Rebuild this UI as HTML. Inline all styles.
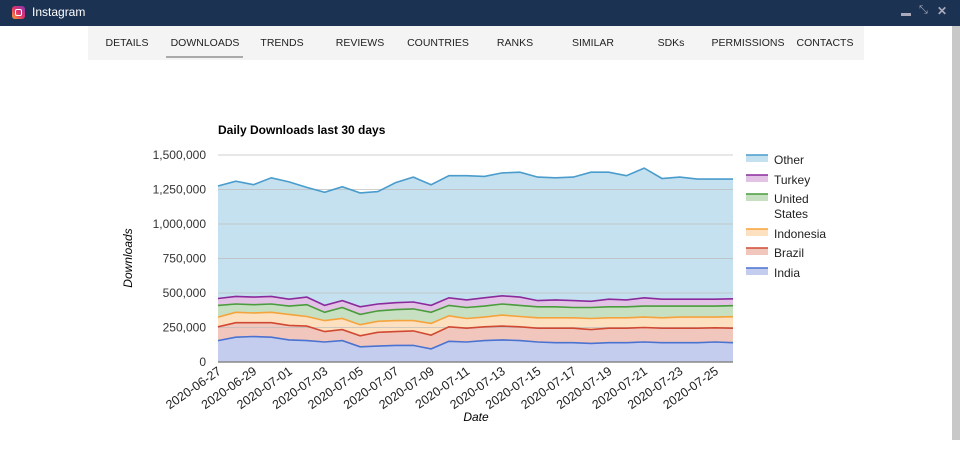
<!DOCTYPE html><html><head><meta charset="utf-8"><style>
*{margin:0;padding:0;box-sizing:border-box}
body{width:960px;height:455px;overflow:hidden;background:#fff;font-family:"Liberation Sans",sans-serif;position:relative}
.hdr{position:absolute;left:0;top:0;width:960px;height:26px;background:#1b3252;color:#fff;font-size:12px}
.nav{position:absolute;left:88px;top:26px;width:776px;height:34px;background:#f4f4f4;font-size:10.5px;color:#222}
.nav span{position:absolute;top:11px;transform:translateX(-50%);white-space:nowrap}
.sb{position:absolute;left:952px;top:26px;width:8px;height:414px;background:#c8c8c8}
</style></head><body>
<div class="hdr">
<div style="position:absolute;left:12px;top:6px;width:13px;height:13px;border-radius:3px;background:linear-gradient(45deg,#f9a334,#e1306c,#833ab4)"><div style="position:absolute;left:3px;top:3px;width:7px;height:7px;border:1.3px solid #fff;border-radius:2px"></div></div>
<div style="position:absolute;left:32px;top:5px">Instagram</div>
<div style="position:absolute;left:901px;top:13px;width:10px;height:3px;background:#aab"></div>
<div style="position:absolute;left:919px;top:4px;color:#aab;font-size:11px">⤡</div>
<div style="position:absolute;left:937px;top:4px;color:#aab;font-size:12px;font-weight:bold">✕</div>
</div>
<div class="nav">
<span style="left:39px">DETAILS</span><span style="left:117px">DOWNLOADS</span><span style="left:194px">TRENDS</span><span style="left:272px">REVIEWS</span><span style="left:350px">COUNTRIES</span><span style="left:427px">RANKS</span><span style="left:505px">SIMILAR</span><span style="left:583px">SDKs</span><span style="left:660px">PERMISSIONS</span><span style="left:737px">CONTACTS</span>
<div style="position:absolute;left:78px;top:30px;width:77px;height:2px;background:#aaa"></div>
</div>
<div class="sb"></div>
<svg id="c" width="960" height="455" style="position:absolute;left:0;top:0" font-family="Liberation Sans, sans-serif"></svg>
<script>
var s=document.getElementById('c'),h='';
var L=218,R=733,B=362,k=207/1500;
function Y(v){return B-v*k}
function X(i){return L+i*(R-L)/29}
var d=[
[155,180,185,180,160,155,145,155,110,115,120,120,95,150,145,155,160,155,145,140,140,135,140,140,145,140,140,140,145,140],
[255,285,285,285,265,260,220,235,190,215,220,225,195,255,245,255,260,255,245,245,245,235,245,245,250,245,245,245,248,245],
[325,360,355,360,345,330,300,315,270,295,300,300,280,335,315,325,340,330,320,320,320,315,320,320,325,320,325,325,325,328],
[410,420,415,420,405,415,360,395,345,370,380,385,360,410,395,405,420,410,400,400,395,395,400,400,405,405,405,405,405,408],
[460,475,470,475,455,470,410,445,400,420,430,435,410,465,450,465,480,470,445,450,445,440,455,450,465,455,455,455,455,458],
[1275,1310,1285,1335,1305,1265,1230,1270,1225,1235,1300,1340,1285,1350,1350,1345,1370,1375,1340,1335,1340,1375,1375,1350,1405,1330,1340,1325,1325,1325]];
var lc=['#4a72d0','#d04a33','#f5a33c','#4a9c3c','#8a2a9c','#4a9ccc'],fc=['#c5cdef','#f1c6bd','#fde0bf','#c7e0c2','#e2c3e6','#c5e1ef'];
var q='';
for(var j=5;j>=0;j--){var p='';for(var i=0;i<30;i++){p+=(i?'L':'M')+X(i).toFixed(1)+','+Y(d[j][i]).toFixed(1)}
var a=p;for(var i=29;i>=0;i--){a+='L'+X(i).toFixed(1)+','+(j?Y(d[j-1][i]):B).toFixed(1)}
h+='<path d="'+a+'Z" fill="'+fc[j]+'"/>';q+='<path d="'+p+'" fill="none" stroke="'+lc[j]+'" stroke-width="1.6"/>'}
for(var j=1;j<=6;j++){var yy=Y(j*250);h+='<line x1="'+L+'" x2="'+R+'" y1="'+yy+'" y2="'+yy+'" stroke="#bbb" stroke-opacity="0.7"/>'}
h+=q;
h+='<line x1="'+L+'" x2="'+R+'" y1="'+B+'" y2="'+B+'" stroke="#888" stroke-width="1.5"/>';
var lab=['0','250,000','500,000','750,000','1,000,000','1,250,000','1,500,000'];
for(var j=0;j<7;j++)h+='<text x="206" y="'+(Y(j*250)+4)+'" text-anchor="end" font-size="12" fill="#333">'+lab[j]+'</text>';
for(var i=0;i<30;i+=2){var dt=new Date(2020,5,27+i),m=('0'+(dt.getMonth()+1)).slice(-2),dd=('0'+dt.getDate()).slice(-2);
h+='<text transform="translate('+(X(i)+4)+',373) rotate(-35)" text-anchor="end" font-size="12.5" fill="#222">2020-'+m+'-'+dd+'</text>'}
h+='<text x="218" y="134" font-size="12" font-weight="bold">Daily Downloads last 30 days</text>';
h+='<text transform="translate(132,258) rotate(-90)" text-anchor="middle" font-size="12" font-style="italic">Downloads</text>';
h+='<text x="476" y="421" text-anchor="middle" font-size="12" font-style="italic">Date</text>';
var lg=[['Other',160,5],['Turkey',180,4],['United',199,3],['Indonesia',234,2],['Brazil',253,1],['India',273,0]];
lg.forEach(function(g){h+='<rect x="746" y="'+(g[1]-5)+'" width="22" height="7" fill="'+fc[g[2]]+'"/><line x1="746" x2="768" y1="'+(g[1]-5)+'" y2="'+(g[1]-5)+'" stroke="'+lc[g[2]]+'" stroke-width="1.6"/><text x="774" y="'+(g[1]+4)+'" font-size="12" fill="#222">'+g[0]+'</text>'});
h+='<text x="774" y="218" font-size="12" fill="#222">States</text>';
s.innerHTML=h;
</script>
</body></html>
